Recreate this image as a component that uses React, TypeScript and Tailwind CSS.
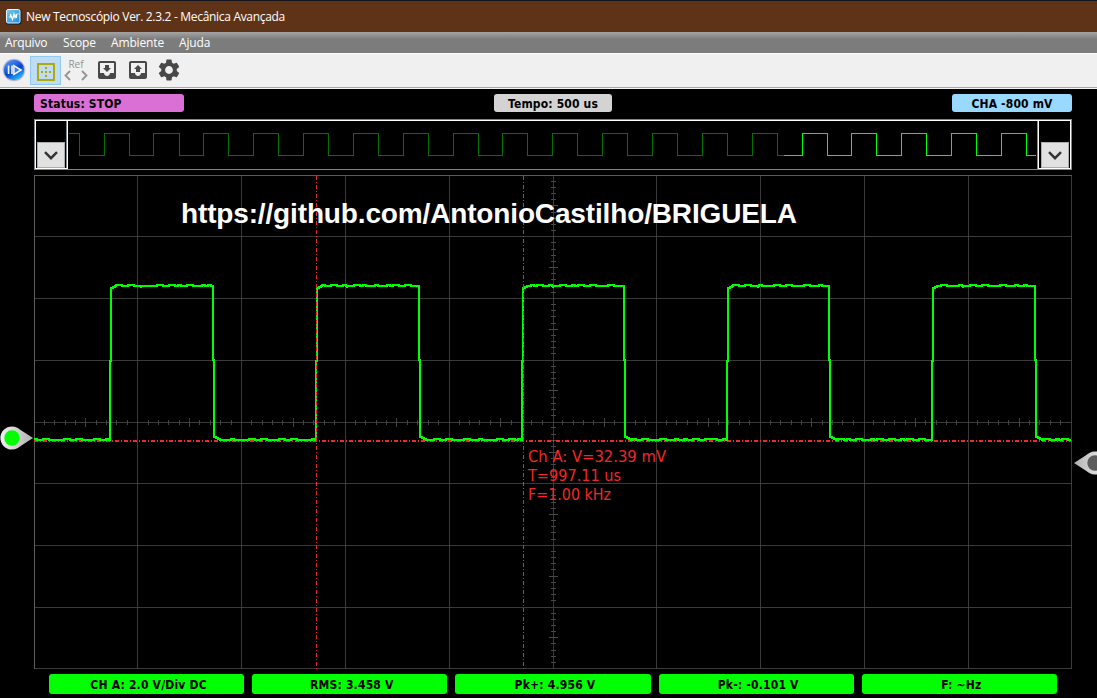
import { MdMoveToInbox, MdOutbox, MdSettings } from "react-icons/md";

const TAHOMA = "font-['DejaVu_Sans_Condensed','DejaVu_Sans',sans-serif]";

const MENU = ["Arquivo", "Scope", "Ambiente", "Ajuda"];
const MENU_WIDTHS = ["w-[58px]", "w-[48px]", "w-[68px]", "w-[40px]"];

const READINGS = ["CH A: 2.0 V/Div DC", "RMS: 3.458 V", "Pk+: 4.956 V", "Pk-: -0.101 V", "F: ~Hz"];

/* Coordinates below are in plot space: origin at the left/top border of each panel. */
const GRID_X = [0, 103, 207, 311, 415, 519, 622, 726, 830, 934, 1037];
const GRID_Y = [0, 61, 123, 185, 247, 308, 370, 432, 493];

function AppIcon() {
  return (
    <svg width="16" height="16" viewBox="0 0 16 16">
      <defs>
        <linearGradient id="app" x1="0" y1="0" x2="1" y2="1">
          <stop offset="0" stopColor="#7cc8f0" />
          <stop offset="1" stopColor="#1690dc" />
        </linearGradient>
      </defs>
      <rect width="15.5" height="15.5" rx="2" fill="#0c1c28" />
      <rect x="0.5" y="0.5" width="13.5" height="13.5" rx="1.5" fill="url(#app)" stroke="#e4f5ff" />
      <path d="M3 8h1.500V5l2 5.500L8 5l1 3.500L10.500 5v4M12 4.500v1" fill="none" stroke="#fff" strokeWidth="1.2" />
    </svg>
  );
}

function PlayIcon() {
  return (
    <svg width="24" height="24" viewBox="0 0 24 24">
      <defs>
        <linearGradient id="play" x1="0" y1="0" x2="0.6" y2="1">
          <stop offset="0" stopColor="#6c9ef0" />
          <stop offset="0.48" stopColor="#1c5be0" />
          <stop offset="0.6" stopColor="#0640cc" />
          <stop offset="1" stopColor="#28b4f8" />
        </linearGradient>
      </defs>
      <circle cx="12" cy="12" r="11.3" fill="#b9bdc8" />
      <circle cx="12" cy="12" r="10.2" fill="url(#play)" />
      <path d="M6.6 7.5v8.6M10 7.5v8.6" stroke="#e9f2ff" strokeWidth="1.7" />
      <path d="M11.9 7.7L19 12l-7.1 4.3z" fill="#3b7bf0" stroke="#f4f8ff" strokeWidth="1.5" />
    </svg>
  );
}

function GridIcon() {
  return (
    <svg width="18" height="18" viewBox="0 0 18 18" fill="#abab10" shapeRendering="crispEdges">
      <path d="M0 0h18v18H0zM2 2v14h14V2z" fillRule="evenodd" />
      <path d="M8 4h2v2H8zM8 8h2v2H8zM8 12h2v2H8zM4 8h2v2H4zM12 8h2v2h-2z" />
    </svg>
  );
}

function Scroller({ side }: { side: "left" | "right" }) {
  const frame =
    side === "left"
      ? "w-[33px] border-x border-b border-white pl-px shadow-[inset_-1px_0_#80868c]"
      : "w-[33px] border-x border-b border-white pl-[2px] shadow-[-1px_0_#80868c]";
  return (
    <div className={`flex h-[48px] items-end ${frame}`}>
      <div className="flex h-[26px] w-[28px] items-center justify-center border border-[#adadad] bg-[#e1e1e1]">
        <svg width="14" height="9" viewBox="0 0 14 9">
          <path d="M1 1.2l6 6 6-6" fill="none" stroke="#333" strokeWidth="2.4" />
        </svg>
      </div>
    </div>
  );
}

/* Overview trace, drawn from x = 69 to x = 1036 of the window. */
function overviewPath() {
  let d = "M0 .5";
  for (let k = 0; k < 20; k++) {
    const fall = Math.floor(10.3 + 49.85 * k) + 0.5;
    const rise = Math.floor(35.1 + 49.85 * k) + 0.5;
    d += ` H${fall} V22.5`;
    if (k < 19) d += ` H${rise} V.5`;
  }
  return d + " H967";
}

function Overview() {
  const d = overviewPath();
  return (
    <svg width="968" height="24" viewBox="0 0 968 24" shapeRendering="crispEdges" fill="none">
      <defs>
        <clipPath id="past"><rect width="715" height="24" /></clipPath>
        <clipPath id="now"><rect x="715" width="253" height="24" /></clipPath>
      </defs>
      <path d={d} stroke="#007200" clipPath="url(#past)" />
      <path d={d} stroke="#00ff00" clipPath="url(#now)" />
    </svg>
  );
}

function noise(x: number) {
  return Math.sin(x * 1.7) + Math.sin(x * 0.61 + 1) > 0.2 ? -1 : 0;
}

function tracePath() {
  const rises = [76, 282, 488, 693, 898];
  const falls = [180, 386, 591, 796, 1002];
  let d = "M0 265";
  let x = 0;
  const run = (to: number, y: number) => {
    for (; x < to; x += 3) d += ` H${x} V${y + noise(x)}`;
    d += ` V${y} H${to}`;
  };
  rises.forEach((r, i) => {
    run(r, 265);
    d += ` V186 H${r + 1} V113 H${r + 3} V112 H${r + 5} V111`;
    x = r + 6;
    const mid = r + 31;
    run(mid, 111);
    d += " V113 V111";
    x = mid + 1;
    run(falls[i] - 1, 111);
    d += ` V110 V185 H${falls[i]} V262 H${falls[i] + 2} V263 H${falls[i] + 4} V264 H${falls[i] + 6} V265`;
    x = falls[i] + 8;
  });
  run(1037, 265);
  return d;
}

function Scope() {
  const xTicks: number[] = [];
  for (let i = 1; i < 100; i++) if (i % 10) xTicks.push(i);
  const yTicks: number[] = [];
  for (let i = 1; i < 80; i++) if (i % 10) yTicks.push(i);
  return (
    <svg width="1038" height="494" viewBox="0 0 1038 494" className="block" fill="none">
      <g shapeRendering="crispEdges">
        <g fill="#484848">
          {GRID_X.map((x) => <rect key={x} x={x} y={0} width={1} height={494} fillOpacity={0.8} />)}
          {GRID_Y.map((y) => <rect key={y} x={0} y={y} width={1038} height={1} fillOpacity={0.8} />)}
          {xTicks.map((i) => {
            const h = i % 5 === 0 ? 4 : 2;
            return <rect key={i} x={Math.floor(i * 10.37)} y={247 - h} width={1} height={h * 2 + 1} fillOpacity={0.9} />;
          })}
          {yTicks.map((i) => {
            const w = i % 5 === 0 ? 4 : 2;
            return <rect key={i} x={519 - w} y={Math.floor(i * 6.17)} width={w * 2 + 1} height={1} />;
          })}
        </g>
        <path d="M.5 0V494M0 .5H1038" stroke="#5c5c5c" />
        <path d="M0 266H1038" stroke="#f02828" strokeWidth="2" strokeDasharray="4 2 1 2" />
        <path d={tracePath()} stroke="#00ff00" strokeWidth="2" />
        <path d="M282.5 1V494M489.5 1V494" stroke="#f02828" strokeDasharray="4 2 1 2" />
      </g>
      <text x="147" y="48" textLength="616" className="fill-white font-['Liberation_Sans',sans-serif] text-[28px] font-bold">
        https://github.com/AntonioCastilho/BRIGUELA
      </text>
      <g className={`fill-[#f02828] text-[16px] ${TAHOMA}`}>
        <text x="494" y="287" textLength="138" lengthAdjust="spacingAndGlyphs">Ch A: V=32.39 mV</text>
        <text x="494" y="306" textLength="93" lengthAdjust="spacingAndGlyphs">T=997.11 us</text>
        <text x="494" y="325" textLength="83" lengthAdjust="spacingAndGlyphs">F=1.00 kHz</text>
      </g>
    </svg>
  );
}

function Marker({ color, flip }: { color: string; flip?: boolean }) {
  return (
    <svg width="34" height="24" viewBox="0 0 34 24" className={`shrink-0 ${flip ? "-scale-x-100" : ""}`}>
      <defs>
        <linearGradient id={flip ? "mr" : "ml"}>
          <stop offset="0" stopColor="#f0f0f0" />
          <stop offset="1" stopColor="#b0b0b0" />
        </linearGradient>
      </defs>
      <path d="M12 .4C16 .4 19 2.500 21 4.200L33 12 21 19.800C19 21.500 16 23.600 12 23.600A11.600 11.600 0 0 1 12 .4z" fill={`url(#${flip ? "mr" : "ml"})`} />
      <circle cx="12" cy="12" r="7.700" fill={color} />
    </svg>
  );
}

export default function App() {
  return (
    <div className="flex h-[698px] w-[1097px] flex-col overflow-hidden bg-black">
      <header className="flex h-[32px] shrink-0 items-center border-t border-[#17151c] bg-[#5f3317] pl-[6px] font-['Open_Sans','Noto_Sans',sans-serif] text-[12px] text-white">
        <AppIcon />
        <span className="ml-[4px] whitespace-nowrap tracking-[-0.31px]">New Tecnoscópio Ver. 2.3.2 - Mecânica Avançada</span>
      </header>
      <nav className="flex h-[21px] shrink-0 items-center bg-linear-to-b from-[#a5a5a5] to-[#7c7c7c] to-35% pl-[5px] font-['Open_Sans','Noto_Sans',sans-serif] text-[12px] tracking-[-0.15px] text-white">
        {MENU.map((m, i) => <span key={m} className={MENU_WIDTHS[i]}>{m}</span>)}
      </nav>
      <div className="flex h-[36px] shrink-0 flex-col border-t border-white bg-[#f0f0f0]">
        <div className="flex h-[32px] items-center pl-[2px] text-[#484848]">
          <PlayIcon />
          <div className="ml-[4px] flex h-[29px] w-[31px] items-start border border-[#90c8f6] bg-[#c0dcf3] pt-[6px] pl-[6px]">
            <GridIcon />
          </div>
          <div className="flex h-[29px] w-[34px] flex-col items-center pr-[4px] text-[#939393]">
            <span className="font-['Open_Sans','Noto_Sans',sans-serif] text-[10px] leading-[17px]">Ref</span>
            <svg width="24" height="11" viewBox="0 0 24 11" className="mt-[-3px]">
              <path d="M6 1L1.500 5.500 6 10M18 1l4.500 4.500L18 10" fill="none" stroke="currentColor" strokeWidth="1.8" />
            </svg>
          </div>
          <MdMoveToInbox size={24} className="shrink-0" />
          <MdOutbox size={24} className="ml-[7px] shrink-0" />
          <MdSettings size={26} className="ml-[6px] shrink-0" />
        </div>
        <div className="mt-px h-px bg-[#a8a8a8]" />
        <div className="h-px bg-[#f4f4f4]" />
      </div>

      <div className={`mt-[5px] flex h-[18px] shrink-0 items-center justify-between pr-[25px] pl-[34px] text-[12px] leading-[20px] font-bold tracking-[0.15px] text-black ${TAHOMA}`}>
        <div className="h-full w-[150px] rounded-[3px] bg-[#da70d6] pl-[6px]">Status: STOP</div>
        <div className="mr-[30px] h-full w-[118px] rounded-[3px] bg-[#d3d3d3] text-center">Tempo: 500 us</div>
        <div className="h-full w-[120px] rounded-[3px] bg-[#99d9ff] text-center">CHA -800 mV</div>
      </div>

      <section className="mt-[7px] ml-[34px] flex h-[51px] w-[1038px] shrink-0 border border-[#80868c]">
        <div className="flex w-full border-t border-white">
          <Scroller side="left" />
          <div className="flex flex-1 pt-[12px] pl-px">
            <Overview />
          </div>
          <Scroller side="right" />
        </div>
      </section>

      <main className="mt-[5px] flex h-[494px] shrink-0">
        <div className="w-[34px] shrink-0 pt-[251px]">
          <Marker color="#00ff00" />
        </div>
        <Scope />
        <div className="flex w-[25px] shrink-0 overflow-hidden pt-[276px] pl-px">
          <Marker color="#5c5c5c" flip />
        </div>
      </main>

      <footer className={`mt-[5px] ml-[49px] grid h-[20px] w-[1008px] shrink-0 grid-cols-5 gap-[8px] text-center text-[12px] leading-[22px] font-bold tracking-[0.2px] text-black ${TAHOMA}`}>
        {READINGS.map((r) => <div key={r} className="h-[20px] rounded-[3px] bg-[#00ff00] pl-[4px]">{r}</div>)}
      </footer>
    </div>
  );
}
